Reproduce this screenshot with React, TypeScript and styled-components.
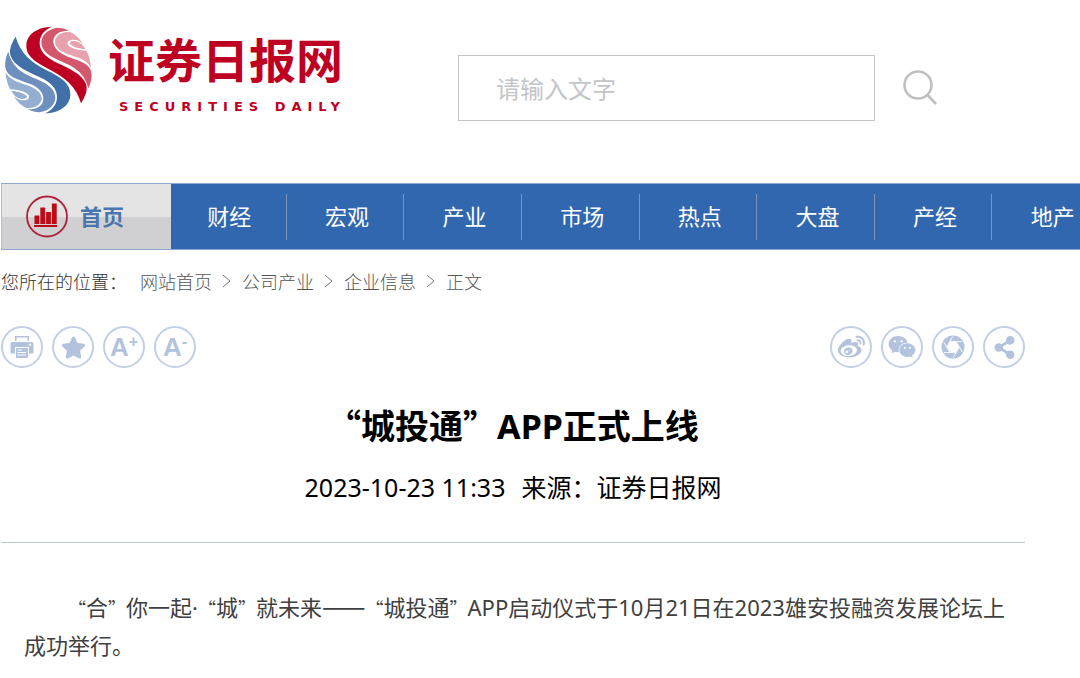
import React from "react";
import styled, { createGlobalStyle } from "styled-components";
import { FaWeibo, FaWeixin, FaShareAlt, FaStar } from "react-icons/fa";

const sans = '"Noto Sans", "Noto Sans CJK SC", sans-serif';
const cjk = '"Noto Sans CJK SC", "Noto Sans", sans-serif';

const GlobalStyle = createGlobalStyle`
  * { box-sizing: border-box; }
  body { margin: 0; background: #fff; color: #000; font-family: ${sans}; overflow-x: hidden; text-spacing-trim: space-all; }
  h1, p, ul, ol { margin: 0; padding: 0; }
  ul, ol { list-style: none; }
  a { color: inherit; text-decoration: none; }
  button { font: inherit; border: 0; background: none; padding: 0; cursor: pointer; }
`;

const Header = styled.header`
  display: flex;
  align-items: flex-start;
  padding: 20px 0 62px;
`;

const Brand = styled.a`
  display: flex;
  width: 458px;
  flex: none;
  color: #be0022;
`;

const Wordmark = styled.span`
  display: flex;
  flex-direction: column;
  padding: 8px 0 0 8px;
`;

const BrandName = styled.span`
  font: bold 47px/60px ${cjk};
`;

const BrandLatin = styled.span`
  padding: 10px 0 0 11px;
  font: bold 13px/18px "DejaVu Sans", sans-serif;
  letter-spacing: 6px;
  white-space: nowrap;
`;

const Search = styled.form`
  display: flex;
  align-items: center;
  gap: 26px;
  flex: 1;
  padding-top: 35px;
`;

const SearchInput = styled.input`
  flex: 0 1 417px;
  min-width: 0;
  height: 66px;
  padding: 0 37px;
  border: 1px solid #c4c4c4;
  border-radius: 0;
  font: 24px ${sans};
  color: #333;
  outline: none;
  &::placeholder { color: #c3c5c8; opacity: 1; }
`;

const SearchButton = styled.button`
  display: flex;
`;

const Nav = styled.nav`
  display: flex;
  height: 67px;
  margin-left: 1px;
  overflow: hidden;
  background: #3167af;
  border-top: 1px solid #8ba8d0;
  border-bottom: 1px solid #8ba8d0;
`;

const HomeLink = styled.a`
  display: flex;
  align-items: center;
  gap: 11px;
  width: 170px;
  flex: none;
  padding-left: 23px;
  border-left: 1px solid #bcbdc0;
  background: linear-gradient(#e4e4e5 50%, #d0d0d3 50%);
  color: #4a75ae;
  font-size: 22px;
  font-weight: bold;
`;

const HomeLabel = styled.span`
  padding-bottom: 4px;
`;

const NavList = styled.ul`
  display: grid;
  grid-template-columns: repeat(8, 1fr);
  align-items: center;
  flex: 1;
  margin: 0 -30px 0 -2px;
`;

const NavItem = styled.li`
  display: flex;
  align-items: center;
  justify-content: center;
  height: 46px;
  padding: 0 0 4px 4px;
  border-right: 1px solid #7f94b7;
  color: #fff;
  font-size: 22px;
  white-space: nowrap;
`;

const Content = styled.main`
  padding: 0 55px 0 1px;
`;

const Crumbs = styled.nav`
  display: flex;
  align-items: center;
  height: 62px;
  gap: 13px;
  color: #333;
  font: 300 18px/26px ${cjk};
`;

const CrumbList = styled.ol`
  display: flex;
  align-items: center;
  gap: 10px;
`;

const Crumb = styled.li`
  display: flex;
  align-items: center;
  gap: 10px;
  color: #555;
`;

const Tools = styled.div`
  display: flex;
  justify-content: space-between;
  padding-top: 14px;
`;

const ToolGroup = styled.div`
  display: flex;
  gap: 9px;
`;

const ToolButton = styled.button`
  display: flex;
  align-items: center;
  justify-content: center;
  width: 42px;
  height: 42px;
  border: 2px solid #c3cfe4;
  border-radius: 50%;
  color: #b3c3dd;
`;

const FontSizeLabel = styled.span`
  display: flex;
  align-items: flex-start;
  font: bold 26px/28px "Liberation Sans", sans-serif;
  sup { font-size: 16px; line-height: 18px; }
`;

const ArticleHead = styled.header`
  padding: 31px 0 36px;
  border-bottom: 1px solid #b9c8ca;
  text-align: center;
`;

const Title = styled.h1`
  font-size: 34px;
  line-height: 52px;
`;

const TitleQuote = styled.span`
  font-family: ${cjk};
`;

const Meta = styled.p`
  display: flex;
  justify-content: center;
  gap: 16px;
  padding-top: 16px;
  font-size: 25px;
  line-height: 38px;
`;

const Body = styled.p`
  padding: 45px 0 0 23px;
  color: #404040;
  font-size: 22px;
  line-height: 38px;
  text-indent: 44px;
`;

const Quote = styled.span`
  font-family: ${cjk};
  font-size: 18px;
  line-height: 1;
`;

const Dash = styled.span`
  font-family: "Noto Sans CJK SC", sans-serif;
  font-size: 26px;
  line-height: 1;
`;

const Bands = ({ colors }: { colors: string[] }) => (
  <g>
    <path fill={colors[0]} d="M155 20C112 21 80 43 79 76C78 112 113 130 150 149C198 174 229 200 243 250C256 229 264 211 258 192C246 161 207 145 170 128C136 112 118 93 119 67C120 44 135 29 155 20Z" />
    <path fill={colors[1]} d="M171 23C144 28 125 44 124 66C124 94 149 109 181 123C221 140 253 156 265 205C274 187 278 165 271 148C260 125 224 119 197 107C174 97 160 82 160 64C160 42 182 31 207 32C195 26 184 23 171 23Z" />
    <path fill={colors[2]} d="M209 35C184 35 165 47 165 65C166 85 187 97 211 105C240 115 262 121 273 143C272 123 267 105 259 92C244 91 225 89 211 81C197 73 201 60 218 59C231 58 241 63 250 74C241 57 227 43 209 35Z" />
    <path fill={colors[2]} d="M209 69C212 63 220 62 229 64C241 67 249 76 257 88C237 86 214 81 209 69Z" />
  </g>
);

const LogoMark = () => (
  <svg width="100" height="100" viewBox="0 0 300 300" aria-hidden="true">
    <Bands colors={["#be0022", "#d4586d", "#e7a2ad"]} />
    <g transform="rotate(180 145 150)">
      <Bands colors={["#416fa7", "#6e90be", "#93aed0"]} />
    </g>
  </svg>
);

const SearchIcon = () => (
  <svg width="38" height="38" viewBox="0 0 38 38" fill="none" stroke="#c0c0c0" strokeWidth="2.6" aria-hidden="true">
    <circle cx="17" cy="16" r="13.500" />
    <path d="M26 25.500L35 35" />
  </svg>
);

const ChartIcon = () => (
  <svg width="44" height="44" viewBox="0 0 44 44" aria-hidden="true">
    <circle cx="22" cy="21.500" r="20" fill="none" stroke="#ae2138" strokeWidth="1.800" />
    <path fill="#bd0a14" d="M9.500 20.500h4.800v8.500h-4.800zM15.300 12.500h4.800v16.500h-4.800zM21.100 17h4.800v12h-4.800zM26.900 8.500h4.800v20.500h-4.800zM9 30h23v2H9z" />
  </svg>
);

const ChevronIcon = () => (
  <svg width="10" height="14" viewBox="0 0 10 14" fill="none" stroke="#777" aria-hidden="true">
    <path d="M1 1L8 7L1 13" />
  </svg>
);

const PrintIcon = () => (
  <svg width="24" height="24" viewBox="0 0 24 24" fill="currentColor" aria-hidden="true">
    <path d="M5 6V1H19V6H17.500V2.500H6.500V6Z" />
    <path fillRule="evenodd" d="M2 7H22Q23.500 7 23.500 8.500V17Q23.500 18.500 22 18.500H19V12H5V18.500H2Q.5 18.500 .5 17V8.500Q.5 7 2 7ZM20 8.500a1.200 1.200 0 1 0 .1 0Z" />
    <path fillRule="evenodd" d="M6 13H18V23H6ZM7.500 14.500V15.500H12V14.500ZM7.500 17V18H16V17ZM7.500 19.500V20.500H16V19.500Z" />
  </svg>
);

const ApertureIcon = () => (
  <svg width="26" height="26" viewBox="0 0 26 26" aria-hidden="true">
    <circle cx="13" cy="13" r="11.500" fill="currentColor" />
    <path fill="#fff" d="M10 7.500H16L19 13L16 18.500H10L7 13Z" />
    <g stroke="#fff" strokeWidth=".8">
      {[0, 60, 120, 180, 240, 300].map((angle) => (
        <path key={angle} d="M10 7.500H22" transform={`rotate(${angle} 13 13)`} />
      ))}
    </g>
  </svg>
);

const channels = ["财经", "宏观", "产业", "市场", "热点", "大盘", "产经", "地产"];
const trail = ["网站首页", "公司产业", "企业信息"];

export default function App() {
  return (
    <>
      <GlobalStyle />
      <Header>
        <Brand href="#">
          <LogoMark />
          <Wordmark>
            <BrandName>证券日报网</BrandName>
            <BrandLatin>SECURITIES DAILY</BrandLatin>
          </Wordmark>
        </Brand>
        <Search>
          <SearchInput type="text" aria-label="搜索" placeholder="请输入文字" />
          <SearchButton type="button" aria-label="搜索"><SearchIcon /></SearchButton>
        </Search>
      </Header>
      <Nav>
        <HomeLink href="#"><ChartIcon /><HomeLabel>首页</HomeLabel></HomeLink>
        <NavList>
          {channels.map((name) => (
            <NavItem key={name}><a href="#">{name}</a></NavItem>
          ))}
        </NavList>
      </Nav>
      <Content>
        <Crumbs>
          <span>您所在的位置：</span>
          <CrumbList>
            {trail.map((name) => (
              <Crumb key={name}><a href="#">{name}</a><ChevronIcon /></Crumb>
            ))}
            <Crumb>正文</Crumb>
          </CrumbList>
        </Crumbs>
        <Tools>
          <ToolGroup>
            <ToolButton aria-label="打印"><PrintIcon /></ToolButton>
            <ToolButton aria-label="收藏"><FaStar size={25} /></ToolButton>
            <ToolButton aria-label="放大字体"><FontSizeLabel>A<sup>+</sup></FontSizeLabel></ToolButton>
            <ToolButton aria-label="缩小字体"><FontSizeLabel>A<sup>-</sup></FontSizeLabel></ToolButton>
          </ToolGroup>
          <ToolGroup>
            <ToolButton aria-label="微博"><FaWeibo size={27} /></ToolButton>
            <ToolButton aria-label="微信"><FaWeixin size={28} /></ToolButton>
            <ToolButton aria-label="朋友圈"><ApertureIcon /></ToolButton>
            <ToolButton aria-label="分享"><FaShareAlt size={23} /></ToolButton>
          </ToolGroup>
        </Tools>
        <article>
          <ArticleHead>
            <Title><TitleQuote>“</TitleQuote>城投通<TitleQuote>”</TitleQuote>APP正式上线</Title>
            <Meta><span>2023-10-23 11:33</span><span>来源：证券日报网</span></Meta>
          </ArticleHead>
          <Body>
            <Quote>“</Quote><span>合</span><Quote>”</Quote><span>你一起·</span><Quote>“</Quote><span>城</span><Quote>”</Quote><span>就未来</span><Dash>——</Dash><Quote>“</Quote><span>城投通</span><Quote>”</Quote><span>APP启动仪式于10月21日在2023雄安投融资发展论坛上</span><span>成功举行。</span>
          </Body>
        </article>
      </Content>
    </>
  );
}
